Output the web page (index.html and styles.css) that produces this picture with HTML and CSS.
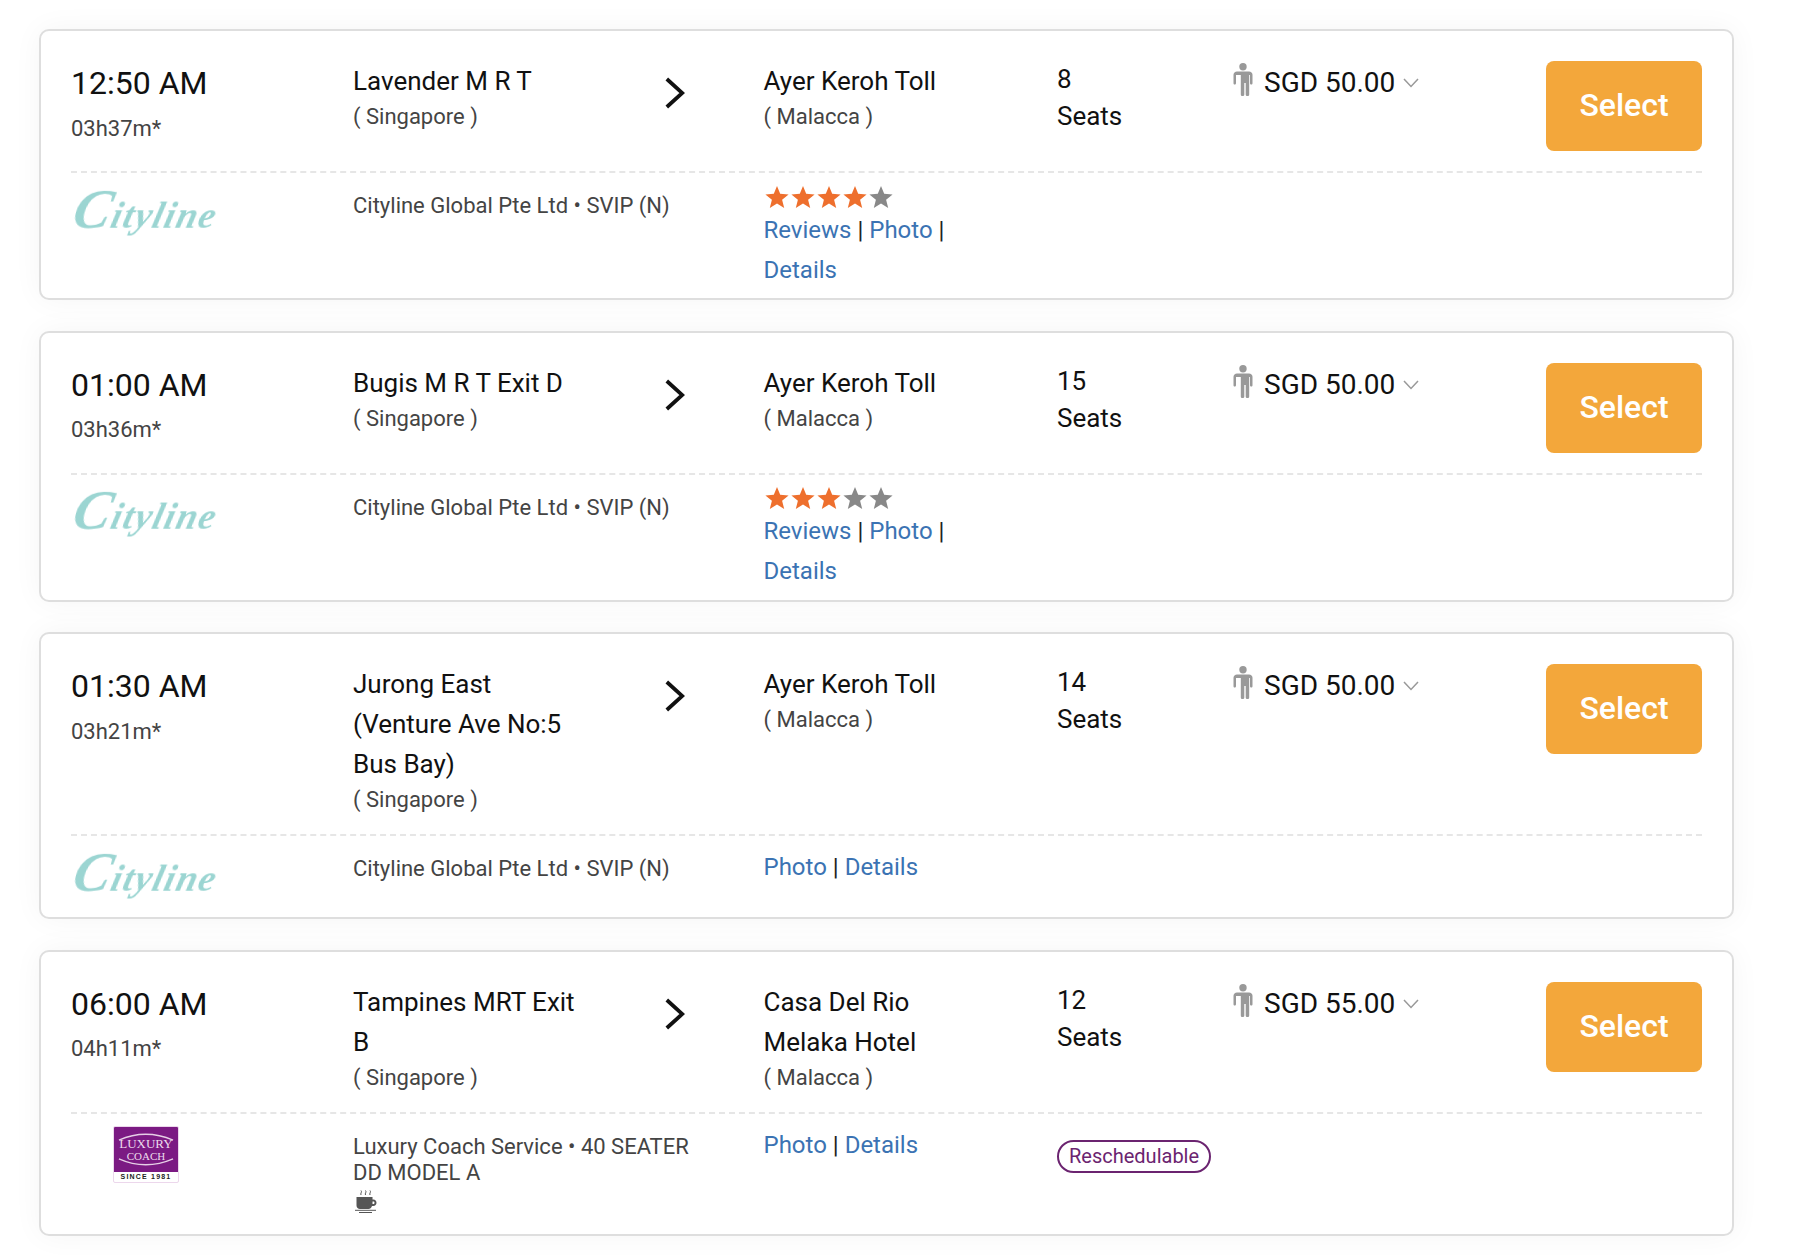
FILE: index.html
```html
<!DOCTYPE html>
<html lang="en">
<head>
<meta charset="utf-8">
<title>Trips</title>
<link rel="stylesheet" href="styles.css">
</head>
<body>
<svg class="defs" aria-hidden="true">
  <symbol id="star" viewBox="0 0 26 24"><path d="M13 1l3.200 7.800 8.400.6-6.500 5.400 2.100 8.200L13 18.500 5.800 23l2.100-8.200L1.400 9.400l8.400-.6z"/></symbol>
  <symbol id="person" viewBox="0 0 20 33"><circle cx="10" cy="3.800" r="3.700"/><path d="M4 8.500h12c2 0 3.500 1.300 3.500 3.300V20c0 1-.5 1.500-1.200 1.500S17 21 17 20v-8h-.8v19.500c0 1-.7 1.500-1.700 1.500s-1.800-.5-1.800-1.500V20h-1.400v11.500c0 1-.8 1.500-1.800 1.500s-1.700-.5-1.700-1.500V12H3v8c0 1-.6 1.500-1.300 1.500S.5 21 .5 20v-8.200c0-2 1.500-3.300 3.500-3.300z"/></symbol>
  <symbol id="go" viewBox="0 0 20 32"><path d="M1.800 2l15.500 14-15.500 14" fill="none" stroke="#111" stroke-width="3.800"/></symbol>
  <symbol id="down" viewBox="0 0 16 10"><path d="M1 1l7 7.500L15 1" fill="none" stroke="#999" stroke-width="1.500"/></symbol>
</svg>
<main class="list">

  <article class="card">
    <div class="top">
      <div><div class="time">12:50 AM</div><div class="dur">03h37m*</div></div>
      <div><div class="place">Lavender M R T</div><div class="city">( Singapore )</div></div>
      <svg class="go"><use href="#go"/></svg>
      <div class="to"><div class="place">Ayer Keroh Toll</div><div class="city">( Malacca )</div></div>
      <div class="seats">8<br>Seats</div>
      <div class="price"><svg class="person"><use href="#person"/></svg><span class="amount">SGD 50.00</span><svg class="down"><use href="#down"/></svg></div>
      <button class="select">Select</button>
    </div>
    <div class="bottom">
      <div class="logo"><span class="cityline">Cityline</span></div>
      <div class="operator">Cityline Global Pte Ltd • SVIP (N)</div>
      <div class="links rated">
        <div class="stars"><svg class="on"><use href="#star"/></svg><svg class="on"><use href="#star"/></svg><svg class="on"><use href="#star"/></svg><svg class="on"><use href="#star"/></svg><svg class="off"><use href="#star"/></svg></div>
        <a href="#">Reviews</a> | <a href="#">Photo</a> | <a href="#">Details</a>
      </div>
    </div>
  </article>

  <article class="card">
    <div class="top">
      <div><div class="time">01:00 AM</div><div class="dur">03h36m*</div></div>
      <div><div class="place">Bugis M R T Exit D</div><div class="city">( Singapore )</div></div>
      <svg class="go"><use href="#go"/></svg>
      <div class="to"><div class="place">Ayer Keroh Toll</div><div class="city">( Malacca )</div></div>
      <div class="seats">15<br>Seats</div>
      <div class="price"><svg class="person"><use href="#person"/></svg><span class="amount">SGD 50.00</span><svg class="down"><use href="#down"/></svg></div>
      <button class="select">Select</button>
    </div>
    <div class="bottom">
      <div class="logo"><span class="cityline">Cityline</span></div>
      <div class="operator">Cityline Global Pte Ltd • SVIP (N)</div>
      <div class="links rated">
        <div class="stars"><svg class="on"><use href="#star"/></svg><svg class="on"><use href="#star"/></svg><svg class="on"><use href="#star"/></svg><svg class="off"><use href="#star"/></svg><svg class="off"><use href="#star"/></svg></div>
        <a href="#">Reviews</a> | <a href="#">Photo</a> | <a href="#">Details</a>
      </div>
    </div>
  </article>

  <article class="card">
    <div class="top">
      <div><div class="time">01:30 AM</div><div class="dur">03h21m*</div></div>
      <div><div class="place">Jurong East (Venture Ave No:5 Bus Bay)</div><div class="city">( Singapore )</div></div>
      <svg class="go"><use href="#go"/></svg>
      <div class="to"><div class="place">Ayer Keroh Toll</div><div class="city">( Malacca )</div></div>
      <div class="seats">14<br>Seats</div>
      <div class="price"><svg class="person"><use href="#person"/></svg><span class="amount">SGD 50.00</span><svg class="down"><use href="#down"/></svg></div>
      <button class="select">Select</button>
    </div>
    <div class="bottom">
      <div class="logo"><span class="cityline">Cityline</span></div>
      <div class="operator">Cityline Global Pte Ltd • SVIP (N)</div>
      <div class="links"><a href="#">Photo</a> | <a href="#">Details</a></div>
    </div>
  </article>

  <article class="card">
    <div class="top">
      <div><div class="time">06:00 AM</div><div class="dur">04h11m*</div></div>
      <div><div class="place">Tampines MRT Exit B</div><div class="city">( Singapore )</div></div>
      <svg class="go"><use href="#go"/></svg>
      <div class="to"><div class="place">Casa Del Rio Melaka Hotel</div><div class="city">( Malacca )</div></div>
      <div class="seats">12<br>Seats</div>
      <div class="price"><svg class="person"><use href="#person"/></svg><span class="amount">SGD 55.00</span><svg class="down"><use href="#down"/></svg></div>
      <button class="select">Select</button>
    </div>
    <div class="bottom">
      <div class="logo">
        <div class="luxury">
          <div class="luxury-mark">
            <svg class="luxury-arcs" viewBox="0 0 65 45"><path d="M5 13Q32 1 60 13M5 32Q32 44 60 32" fill="none" stroke="#e6cfe6" stroke-width="1.300"/></svg>
            <span class="luxury-big">LUXURY</span><span class="luxury-small">COACH</span>
          </div>
          <div class="luxury-since">SINCE 1981</div>
        </div>
      </div>
      <div class="operator">Luxury Coach Service • 40 SEATER DD MODEL A
        <svg class="cup" viewBox="0 0 22 23"><path d="M6 0.500c1.500 1.500-1 3 0 4.500M10.500 0.500c1.500 1.500-1 3 0 4.500M15 0.500c1.500 1.500-1 3 0 4.500" fill="none" stroke="#555" stroke-width="1"/><path fill-rule="evenodd" d="M1.500 7h16v2.500h.8c2 0 3.200 1.300 3.200 3.200s-1.200 3.300-3.200 3.300h-1.300c-.6 2-2 3-3.500 3H5c-2 0-3.500-1.500-3.500-3.500zM17.500 11.500V14h.8c.8 0 1.200-.5 1.200-1.300s-.4-1.200-1.200-1.200z" fill="#555"/><path d="M0 20.300h21M4 22.500h13" stroke="#555" stroke-width="1"/></svg>
      </div>
      <div class="links"><a href="#">Photo</a> | <a href="#">Details</a></div>
      <div class="badge-cell"><span class="badge">Reschedulable</span></div>
    </div>
  </article>

</main>
</body>
</html>
```
FILE: styles.css
```css
* { box-sizing: border-box; }
html, body { margin: 0; }
body {
  background: #fff;
  font-family: Roboto, "Liberation Sans", sans-serif;
  color: #111;
}
.defs { position: absolute; width: 0; height: 0; }
.list {
  width: 1808px;
  padding: 29px 74px 19px 39px;
  display: flex;
  flex-direction: column;
  gap: 30.500px;
}
.card {
  background: #fff;
  border: 2px solid #dedede;
  border-radius: 10px;
  padding: 0 30px;
  box-shadow: 0 0 30px rgba(0, 0, 0, .045);
}
.top, .bottom {
  display: grid;
  grid-template-columns: 282px 250px 160.500px 293.500px 175px 314px 156px;
}
.top {
  padding: 30px 0 20px;
  border-bottom: 2px dashed #e6e6e6;
}
.time {
  font-size: 32px;
  line-height: 44px;
}
.dur {
  margin-top: 8.500px;
  font-size: 22px;
  line-height: 30px;
  color: #444;
}
.place {
  width: 240px;
  font-size: 26px;
  line-height: 40px;
}
.to .place { width: 200px; }
.city {
  padding-top: 1px;
  height: 30px;
  font-size: 22px;
  line-height: 30px;
  color: #444;
}
.go {
  width: 20px;
  height: 32px;
  margin: 16px 0 0 62px;
}
.seats {
  font-size: 26px;
  line-height: 37px;
}
.price {
  display: flex;
  align-items: flex-start;
  font-size: 28px;
  line-height: 40px;
}
.amount { margin-top: 2px; }
.person {
  width: 20px;
  height: 33px;
  margin: 2px 11px 0 1px;
  fill: #999;
}
.down {
  width: 16px;
  height: 10px;
  margin: 17px 0 0 8px;
}
.select {
  width: 156px;
  height: 90px;
  padding: 0 0 2px;
  border: 0;
  border-radius: 8px;
  background: #f3a73b;
  color: #fff;
  font: 500 32px Roboto, "Liberation Sans", sans-serif;
}
.bottom { padding: 10.500px 0 8.500px; }
.logo {
  width: 150px;
  min-height: 62px;
  display: flex;
  justify-content: center;
  align-items: flex-start;
}
.cityline {
  display: block;
  margin-top: 3px;
  font: italic 700 37px/44px "Liberation Serif", serif;
  color: #9bd5d2;
  transform: skewX(-14deg);
  filter: blur(.6px);
  letter-spacing: 1.500px;
}
.cityline::first-letter { font-size: 56px; }
.luxury {
  width: 66px;
  height: 57px;
  margin-top: 2px;
  border: 1px solid #ecd7ec;
  border-radius: 2px;
  background: #fff;
  overflow: hidden;
}
.luxury-mark {
  position: relative;
  height: 45px;
  background: #7b1a83;
  display: flex;
  flex-direction: column;
  align-items: center;
  justify-content: center;
  font-family: "Liberation Serif", serif;
  color: #ecdcec;
}
.luxury-arcs { position: absolute; inset: 0; width: 100%; height: 100%; }
.luxury-big { font-size: 13px; line-height: 13px; }
.luxury-small { font-size: 11px; line-height: 12px; }
.luxury-since {
  font: 700 7px/10px "Liberation Sans", sans-serif;
  letter-spacing: 1.200px;
  text-align: center;
  color: #222;
}
.operator {
  grid-column: 2 / span 2;
  width: 352px;
  padding-top: 9.500px;
  font-size: 22px;
  line-height: 26px;
  color: #444;
}
.cup {
  display: block;
  width: 22px;
  height: 23px;
  margin: 4.500px 0 12px 2px;
}
.links {
  grid-column: 4;
  width: 200px;
  padding-top: .5px;
  font-size: 24px;
  line-height: 40px;
  color: #222;
}
.links.rated { padding-top: 0; }
.links a { color: #3b73b3; text-decoration: none; }
.stars { display: flex; height: 25px; margin: 1px 0 0; }
.stars svg { width: 26px; height: 24px; flex: none; }
.on { fill: #ee6f2d; }
.off { fill: #888; }
.badge-cell { grid-column: 5 / span 2; padding-top: 16px; }
.badge {
  display: inline-block;
  height: 33px;
  padding: 0 10px;
  border: 2px solid #6b2470;
  border-radius: 17px;
  font-size: 20px;
  line-height: 29px;
  color: #6b2470;
}
```
